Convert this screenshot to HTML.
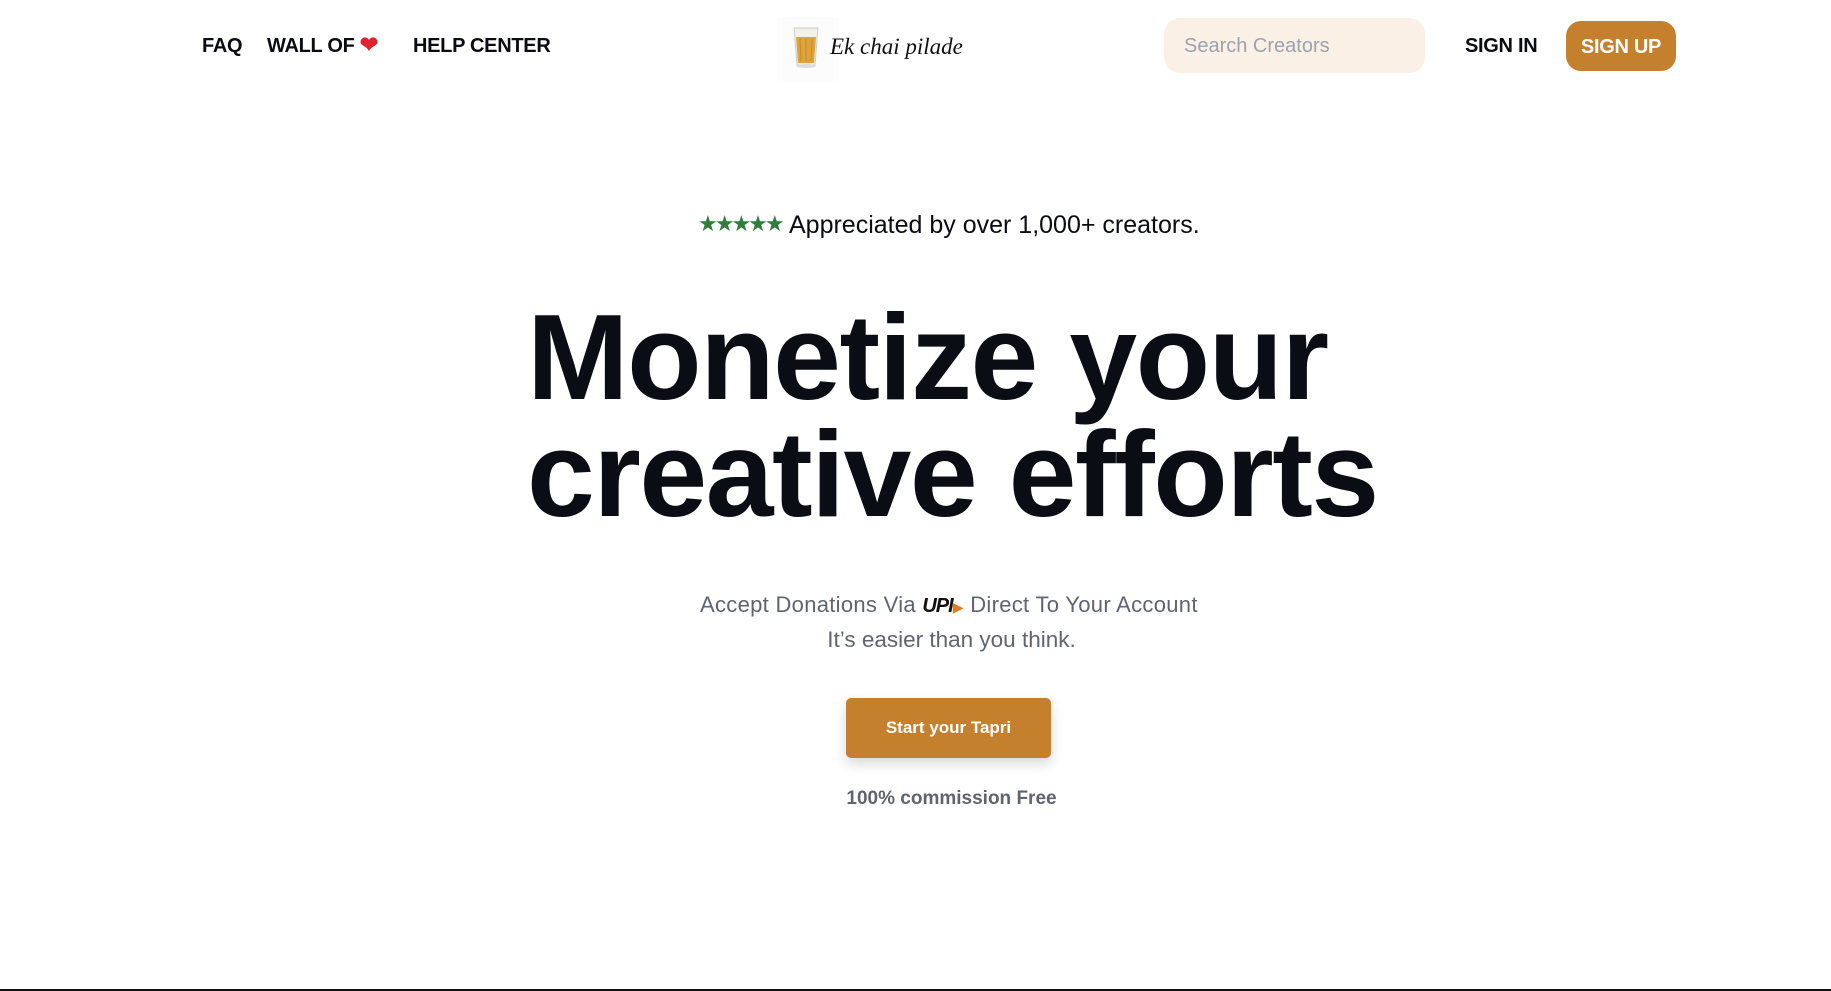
<!DOCTYPE html>
<html><head><meta charset="utf-8"><style>
*{margin:0;padding:0;box-sizing:border-box}
html,body{width:1831px;height:991px;background:#fff;overflow:hidden;font-family:"Liberation Sans",sans-serif;position:relative}
.a{position:absolute;white-space:nowrap}
.nav{font-weight:bold;font-size:20px;color:#0b0b14;top:35px;letter-spacing:-0.3px}
.c{text-align:center}
</style></head><body>
<div class="a nav" style="left:202px">FAQ</div>
<div class="a nav" style="left:267px;top:35px">WALL OF <span style="color:#e0242f;font-size:22px;line-height:20px;display:inline-block;vertical-align:top">&#10084;</span></div>
<div class="a nav" style="left:413px">HELP CENTER</div>

<div class="a" style="left:777px;top:17px;width:62px;height:64px;background:#fcfcfc"></div>
<svg class="a" style="left:791px;top:25px" width="30" height="44" viewBox="0 0 30 44">
<path d="M3 3 L27 3 L24 40 L6 40 Z" fill="#f4f1ea" stroke="#ccc" stroke-width="1"/>
<path d="M5 12 L25 12 L23 38 L7 38 Z" fill="#e0a23c"/>
<path d="M9 14 L10 36 M15 14 L15 36 M21 14 L20 36" stroke="#c98a25" stroke-width="1"/>
<ellipse cx="15" cy="41" rx="10" ry="2" fill="#ddd"/>
</svg>
<div class="a" style="left:830px;top:34px;font-family:'Liberation Serif',serif;font-style:italic;font-size:23px;color:#111">Ek chai pilade</div>

<div class="a" style="left:1164px;top:18px;width:261px;height:55px;background:#faf0e6;border-radius:16px"></div>
<div class="a" style="left:1184px;top:35px;font-size:20px;color:#9ca3af">Search Creators</div>
<div class="a nav" style="left:1465px;top:35px">SIGN IN</div>
<div class="a" style="left:1566px;top:21px;width:110px;height:50px;background:#c5802e;border-radius:15px;color:#fff;font-weight:bold;font-size:20px;text-align:center;line-height:52px;letter-spacing:-0.3px">SIGN UP</div>

<div class="a" style="left:698px;top:211px;color:#2f7d3b;font-size:22px;letter-spacing:-3px">&#9733;&#9733;&#9733;&#9733;&#9733;</div>
<div class="a" style="left:789px;top:211px;font-size:25px;color:#0b0b14">Appreciated by over 1,000+ creators.</div>

<div class="a" style="left:527px;top:299px;font-size:122px;font-weight:bold;color:#0a0d14;line-height:117px;letter-spacing:-1.5px">Monetize your<br>creative efforts</div>

<div class="a" style="left:700px;top:592px;font-size:22px;color:#5f6570;letter-spacing:0.3px">Accept Donations Via <span style="font-style:italic;font-weight:bold;color:#111;font-size:20px;letter-spacing:-1px">UPI</span><span style="color:#e07b22;font-size:14px">&#9654;</span> Direct To Your Account</div>
<div class="a c" style="left:700px;width:503px;top:627px;font-size:22.5px;color:#5f6570">It’s easier than you think.</div>

<div class="a" style="left:846px;top:698px;width:205px;height:60px;background:#c5802e;border-radius:5px;box-shadow:0 6px 12px rgba(0,0,0,.15);color:#fff;font-weight:bold;font-size:17px;text-align:center;line-height:60px">Start your Tapri</div>
<div class="a c" style="left:846px;width:211px;top:788px;font-size:19px;font-weight:bold;color:#5f6570">100% commission Free</div>

<div class="a" style="left:0;top:989px;width:1831px;height:2px;background:#111"></div>
</body></html>
